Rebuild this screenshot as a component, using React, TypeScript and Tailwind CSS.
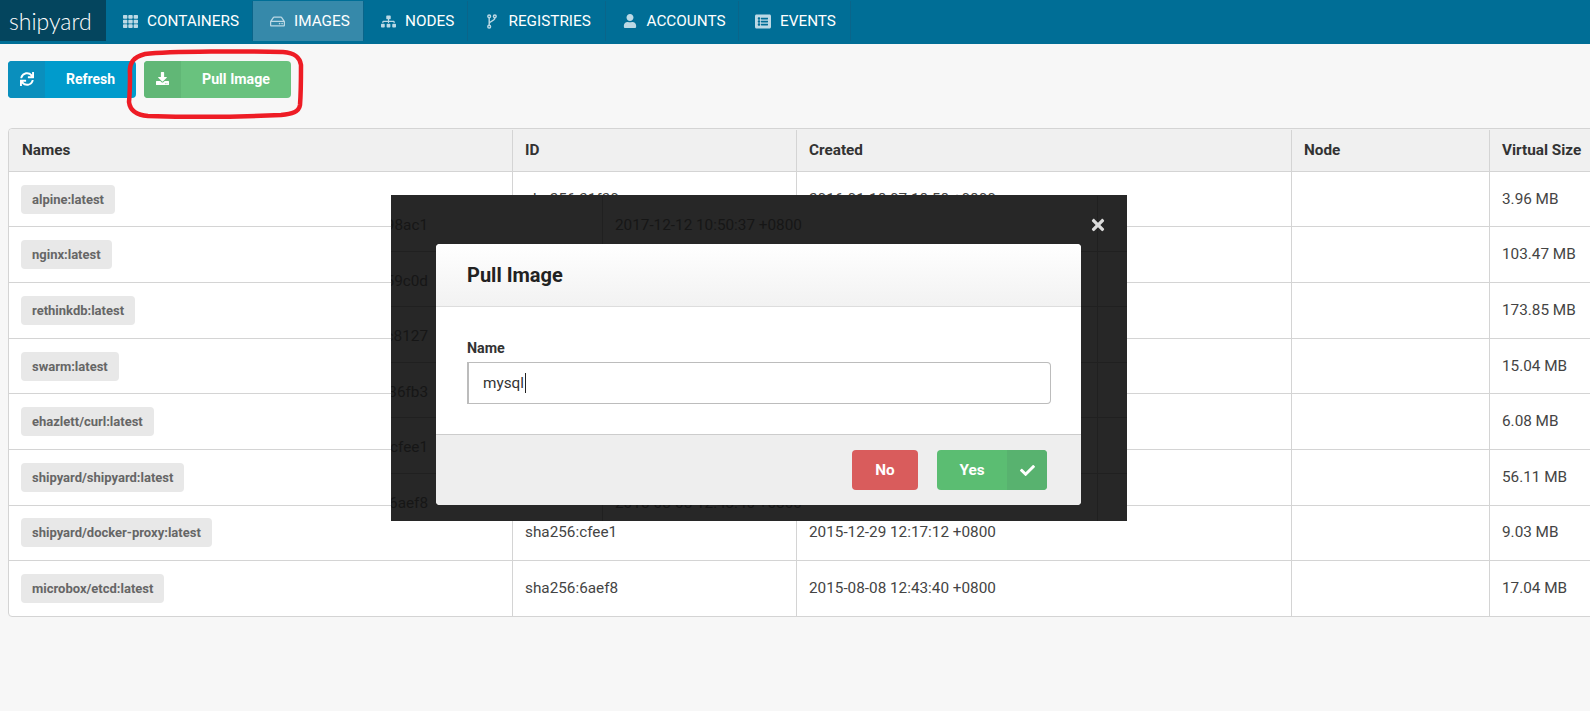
import { FaTh, FaRegHdd, FaSitemap, FaUser, FaListAlt, FaSync, FaDownload, FaCheck, FaTimes } from 'react-icons/fa';

function ForkIcon() {
  return (
    <svg width="10" height="15" viewBox="0 0 10 16" fill="none" stroke="currentColor" strokeWidth="1.5">
      <circle cx="2" cy="2.5" r="1.5" />
      <circle cx="8" cy="2.5" r="1.5" />
      <circle cx="2" cy="13.5" r="1.5" />
      <path d="M2 4v8M8 4c0 4-6 3-6 6.5" />
    </svg>
  );
}

const navItems = [
  { label: 'CONTAINERS', icon: <FaTh size={15} />, width: 'w-[147px]' },
  { label: 'IMAGES', icon: <FaRegHdd size={15} />, width: 'w-[111px]', active: true },
  { label: 'NODES', icon: <FaSitemap size={15} />, width: 'w-[103.5px]' },
  { label: 'REGISTRIES', icon: <ForkIcon />, width: 'w-[138px]' },
  { label: 'ACCOUNTS', icon: <FaUser size={14} />, width: 'w-[133.5px]' },
  { label: 'EVENTS', icon: <FaListAlt size={17} />, width: 'w-[111.5px]' },
];

const images = [
  { name: 'alpine:latest', id: 'sha256:31f30', created: '2016-01-18 07:18:58 +0800', size: '3.96 MB' },
  { name: 'nginx:latest', id: 'sha256:198ac1', created: '2017-12-12 10:50:37 +0800', size: '103.47 MB' },
  { name: 'rethinkdb:latest', id: 'sha256:59c0d', created: '2017-11-30 09:21:14 +0800', size: '173.85 MB' },
  { name: 'swarm:latest', id: 'sha256:c8127', created: '2017-11-02 16:03:48 +0800', size: '15.04 MB' },
  { name: 'ehazlett/curl:latest', id: 'sha256:36fb3', created: '2016-05-20 11:42:09 +0800', size: '6.08 MB' },
  { name: 'shipyard/shipyard:latest', id: 'sha256:a1f6c', created: '2016-02-04 14:35:26 +0800', size: '56.11 MB' },
  { name: 'shipyard/docker-proxy:latest', id: 'sha256:cfee1', created: '2015-12-29 12:17:12 +0800', size: '9.03 MB' },
  { name: 'microbox/etcd:latest', id: 'sha256:6aef8', created: '2015-08-08 12:43:40 +0800', size: '17.04 MB' },
];

// the dialog's dimmer caught a shifted copy of the table in the screenshot
const ghostRows = [
  { id: 'sha256:198ac1', created: '2017-12-12 10:50:37 +0800' },
  { id: 'sha256:59c0d', created: '' },
  { id: 'sha256:c8127', created: '' },
  { id: 'sha256:36fb3', created: '' },
  { id: 'sha256:cfee1', created: '' },
  { id: 'sha256:6aef8', created: '2015-08-08 12:43:40 +0800' },
];

const headers = ['Names', 'ID', 'Created', 'Node', 'Virtual Size'];

export default function App() {
  return (
    <div className="relative h-[711px] overflow-hidden bg-[#f7f7f7] font-['Roboto',sans-serif] text-[15.3px] text-[#444]">
      {/* Top nav */}
      <nav className="flex h-[44px] bg-[#006e96] text-white">
        <div className="flex h-[41px] w-[106px] items-center bg-[#04455e] pt-px pl-[9px] font-['Lato',sans-serif] text-[23px] leading-none font-light">
          shipyard
        </div>
        {navItems.map((item) => (
          <a
            key={item.label}
            className={`mt-px flex h-[40px] items-center border-r border-[#0a658a] ${item.width} ${
              item.active ? 'bg-[#3689aa]' : ''
            }`}
          >
            <span className="ml-[16px] mr-[9px] flex w-[16px] justify-center text-[#bcd9e5]">{item.icon}</span>
            <span>{item.label}</span>
          </a>
        ))}
      </nav>

      {/* Toolbar */}
      <div className="flex gap-[8px] pt-[17px] pl-2 text-[14px] font-bold text-white">
        <button className="flex h-[37px] w-[128px] items-center rounded-[4px] bg-[#009bcc]">
          <span className="flex h-full w-[37px] items-center justify-center rounded-l-[4px] bg-[#0a8fbd]">
            <FaSync size={14} className="-mt-px" />
          </span>
          <span className="ml-[21px]">Refresh</span>
        </button>
        <button className="flex h-[37px] w-[147px] items-center rounded-[4px] bg-[#69c27e]">
          <span className="flex h-full w-[37px] items-center justify-center rounded-l-[4px] bg-[#61b776]">
            <FaDownload size={13} className="-mt-[3px]" />
          </span>
          <span className="ml-[21px] text-[14.2px]">Pull Image</span>
        </button>
      </div>

      {/* Images table */}
      <div className="mt-[30px] ml-2 w-[1586px] rounded-[4px] border border-[#d4d4d4] bg-white">
        <div className="grid h-[42.8px] grid-cols-[503px_284px_495px_198px_1fr] rounded-t-[4px] border-b border-[#d4d4d4] bg-[#f0f0f0] pt-px font-bold text-[#333]">
          {headers.map((h, i) => (
            <div
              key={h}
              className={`flex items-center ${i > 0 ? 'border-l border-[#d4d4d4] pl-[12px]' : 'pl-[13px]'}`}
            >
              {h}
            </div>
          ))}
        </div>
        {images.map((img, i) => (
          <div
            key={img.name}
            className={`grid grid-cols-[503px_284px_495px_198px_1fr] ${
              i < images.length - 1 ? 'h-[55.65px] border-b border-[#d4d4d4]' : 'h-[54.65px]'
            }`}
          >
            <div className="flex items-center pl-[12px]">
              <span className="rounded-[4px] bg-[#e8e8e8] px-[11px] py-[7px] text-[13px] leading-[15px] font-bold text-[#666]">
                {img.name}
              </span>
            </div>
            <div className="flex items-center border-l border-[#d4d4d4] pl-[12px]">{img.id}</div>
            <div className="flex items-center border-l border-[#d4d4d4] pl-[12px]">{img.created}</div>
            <div className="border-l border-[#d4d4d4]" />
            <div className="flex items-center border-l border-[#d4d4d4] pl-[12px]">{img.size}</div>
          </div>
        ))}
      </div>

      {/* Hand-drawn highlight around Pull Image */}
      <svg className="absolute top-[45px] left-[120px] h-[80px] w-[190px]" viewBox="120 45 190 80" fill="none">
        <path
          d="M130 74 C129 63 133 57 145 54 C170 51 250 51 283 52 C296 53 300 58 301 65 C301 80 301 92 300 105 C299 112 292 114 281 115 C240 117 180 117 148 116 C135 115 130 110 129 102 C130 92 130 84 130 74 Z"
          stroke="#ee1c25"
          strokeWidth="4.5"
        />
      </svg>

      {/* Dimmer + dialog */}
      <div className="absolute top-[195px] left-[391px] h-[326px] w-[736px] overflow-hidden bg-[#272727] pt-px text-[#161616]">
        {ghostRows.map((row) => (
          <div key={row.id} className="grid h-[55.5px] grid-cols-[211px_495px_30px] border-b border-[#202020]">
            <div className="flex items-center justify-end pt-[5px] pr-[174px] whitespace-nowrap">{row.id}</div>
            <div className="flex items-center border-l border-[#202020] pt-[5px] pl-[12px]">{row.created}</div>
            <div className="border-l border-[#202020]" />
          </div>
        ))}

        <FaTimes className="absolute top-[21px] left-[698px] text-[#dcdcdc]" size={18} />

        <div className="absolute top-[49px] left-[45px] flex h-[261px] w-[645px] flex-col overflow-hidden rounded-[4px] bg-white text-[#333]">
          <div className="flex h-[63px] items-center border-b border-[#ddd] bg-gradient-to-b from-white to-[#f2f2f2] pl-[31px] text-[20px] font-bold text-[#222]">
            Pull Image
          </div>
          <div className="h-[127px] px-[31px] pt-[32px]">
            <label className="block text-[14.3px] leading-[18px] font-bold text-[#333]">Name</label>
            <div className="mt-[5px] flex h-[42px] w-[584px] items-center rounded-r-[4px] border border-l-2 border-[#bcbcbc] pl-[14px] text-[#333]">
              mysql
              <span className="ml-px h-[20px] w-px bg-[#222]" />
            </div>
          </div>
          <div className="flex h-[71px] justify-end gap-[19px] border-t border-[#ccc] bg-[#eee] pt-[15px] pr-[34px] font-bold text-white">
            <button className="h-[40px] w-[66px] rounded-[4px] bg-[#d95c5c]">No</button>
            <button className="flex h-[40px] w-[110px] items-center rounded-[4px] bg-[#5bbd72]">
              <span className="flex-1 text-center">Yes</span>
              <span className="flex h-full w-[40px] items-center justify-center rounded-r-[4px] bg-[#58b26f]">
                <FaCheck size={15} />
              </span>
            </button>
          </div>
        </div>
      </div>
    </div>
  );
}
